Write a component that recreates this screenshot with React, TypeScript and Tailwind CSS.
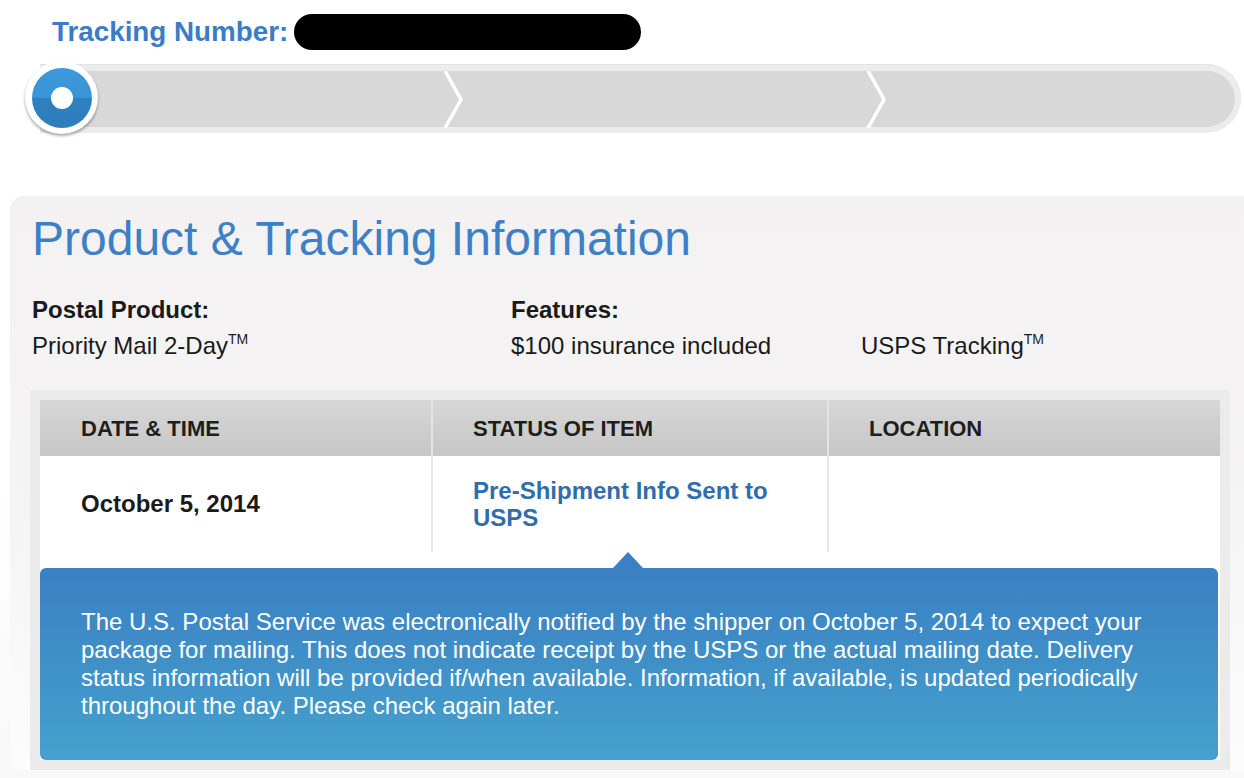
import React from "react";

const features = [
  { label: "Postal Product:", values: [{ text: "Priority Mail 2-Day", tm: true }] },
  {
    label: "Features:",
    values: [
      { text: "$100 insurance included", tm: false },
      { text: "USPS Tracking", tm: true },
    ],
  },
];

function TM() {
  return <span className="relative -top-[10px] text-[14px] leading-none">TM</span>;
}

function ProgressBar() {
  return (
    <div className="relative ml-[24px] mt-[10px] h-[75px] w-[1217px] pt-[4px]">
      {/* track */}
      <div className="ml-[16px] h-[69px] rounded-r-full bg-[#ececec] p-[6px] pl-0 shadow-[inset_0_1px_0_#e2e2e2]">
        <div className="relative h-full rounded-r-full border-t border-[#e9e9e9] bg-[#d8d8d8]">
          <svg className="absolute left-0 top-0" width="1189" height="57">
            <polyline points="405,0 421,28.5 405,57" fill="none" stroke="#fff" strokeWidth="3.5" />
            <polyline points="828,0 844,28.5 828,57" fill="none" stroke="#fff" strokeWidth="3.5" />
          </svg>
        </div>
      </div>
      {/* active step marker */}
      <div className="absolute left-[1px] top-[1px] flex h-[73px] w-[73px] items-center justify-center rounded-full bg-white shadow-[0_2px_3px_rgba(0,0,0,0.35)]">
        <div className="flex h-[60px] w-[60px] items-center justify-center rounded-full bg-[linear-gradient(to_bottom,#3c98da_0%,#3a95d6_50%,#2f80bf_50%,#2e7dbc_100%)]">
          <div className="h-[22px] w-[22px] rounded-full bg-white" />
        </div>
      </div>
    </div>
  );
}

function TrackingTable() {
  return (
    <div className="ml-[20px] mt-[26px] w-[1200px] bg-[#ebebeb] p-[10px]">
      <div className="bg-white">
        <div className="flex h-[56px] bg-[linear-gradient(to_bottom,#d7d7d7,#c6c6c6)] text-[22px] font-bold text-[#1e1e1e]">
          <div className="flex w-[391px] items-center pl-[41px]">DATE &amp; TIME</div>
          <div className="flex w-[396px] items-center border-l-2 border-[#e4e4e4] pl-[40px]">STATUS OF ITEM</div>
          <div className="flex flex-1 items-center border-l-2 border-[#e4e4e4] pl-[40px]">LOCATION</div>
        </div>
        <div className="flex h-[96px] text-[24px] font-bold">
          <div className="flex w-[391px] items-center pl-[41px] text-[#1a1a1a]">October 5, 2014</div>
          <div className="flex w-[396px] items-center border-l-2 border-[#e6e6e6] pl-[40px] leading-[27px] text-[#2f6ead]">
            <span>
              Pre-Shipment Info Sent to
              <br />
              USPS
            </span>
          </div>
          <div className="flex-1 border-l-2 border-[#e6e6e6]" />
        </div>
        <div className="relative h-[16px]">
          <div className="absolute left-[573px] top-0 h-0 w-0 border-x-[15px] border-b-[16px] border-x-transparent border-b-[#3a80c3]" />
        </div>
        <div className="mr-[2px] h-[192px] rounded-[6px] bg-[linear-gradient(to_bottom,#3a80c3,#45a1cd)] pl-[41px] pt-[40px] text-[24px] leading-[28px] text-white">
          The U.S. Postal Service was electronically notified by the shipper on October 5, 2014 to expect your
          <br />
          package for mailing. This does not indicate receipt by the USPS or the actual mailing date. Delivery
          <br />
          status information will be provided if/when available. Information, if available, is updated periodically
          <br />
          throughout the day. Please check again later.
        </div>
      </div>
    </div>
  );
}

export default function App() {
  return (
    <div className="h-[778px] w-[1244px] overflow-hidden bg-[linear-gradient(to_bottom,#ffffff_60%,#f8f8f8)] font-['Liberation_Sans',Arial,Helvetica,sans-serif]">
      <div className="flex h-[50px] items-end pl-[52px]">
        <div className="flex h-[36px] items-center gap-[6px]">
          <span className="text-[27.8px] font-bold text-[#3b7cc7]">Tracking Number:</span>
          <div className="h-[36px] w-[347px] rounded-full bg-black" />
        </div>
      </div>

      <ProgressBar />

      <div className="ml-[10px] mt-[61px] h-[574px] rounded-l-[14px] bg-[linear-gradient(to_bottom,#f3f1f2,#f6f5f5_60%,#fcfcfc)] pt-[19px]">
        <h1 className="pl-[22px] text-[48px] leading-none text-[#3d80c6]">Product &amp; Tracking Information</h1>
        <div className="mt-[29px] flex pl-[22px] text-[24px] leading-[36px] text-[#1a1a1a]">
          {features.map((f, i) => (
            <div key={f.label} className={i === 0 ? "w-[479px]" : ""}>
              <div className="font-bold">{f.label}</div>
              <div className="flex">
                {f.values.map((v, j) => (
                  <div key={v.text} className={j === 0 && f.values.length > 1 ? "w-[350px]" : ""}>
                    {v.text}
                    {v.tm && <TM />}
                  </div>
                ))}
              </div>
            </div>
          ))}
        </div>
        <TrackingTable />
      </div>
    </div>
  );
}
